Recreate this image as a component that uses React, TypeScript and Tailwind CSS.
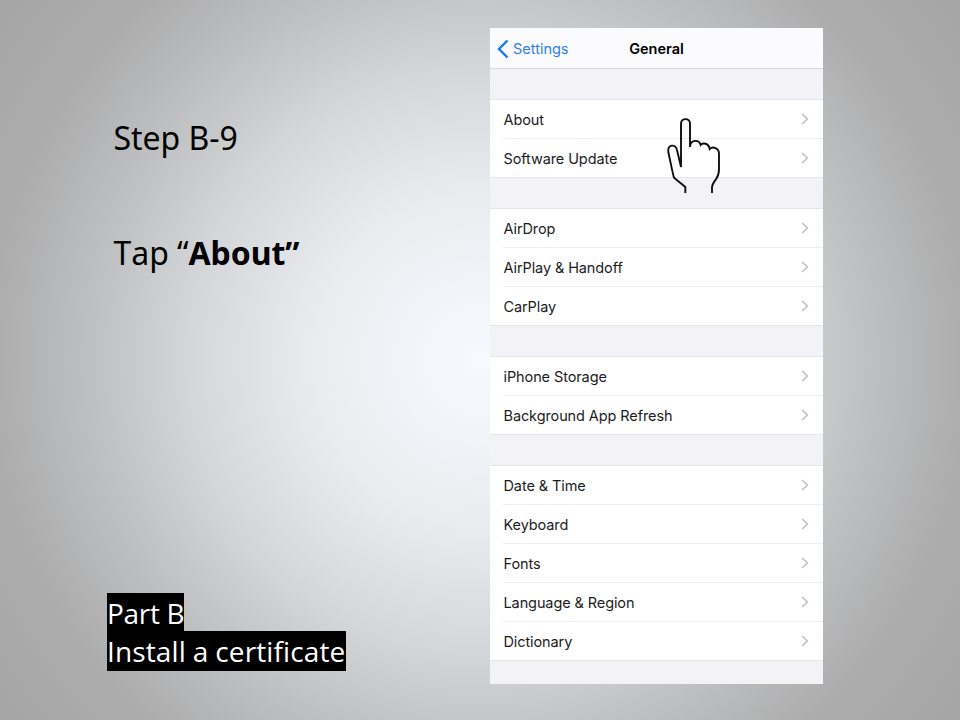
import React from "react";

const groups: string[][] = [
  ["About", "Software Update"],
  ["AirDrop", "AirPlay & Handoff", "CarPlay"],
  ["iPhone Storage", "Background App Refresh"],
  ["Date & Time", "Keyboard", "Fonts", "Language & Region", "Dictionary"],
];

function Chevron() {
  return (
    <svg width="8" height="12" viewBox="0 0 8 12" fill="none" stroke="#c1c1c4" strokeWidth="1.6">
      <path d="M1.2 1 6.3 6 1.2 11" />
    </svg>
  );
}

function Group({ rows }: { rows: string[] }) {
  return (
    <div className="border-t border-[#e5e5e9] bg-white">
      {rows.map((label, i) => (
        <div key={label} className={i === rows.length - 1 ? "border-b border-[#e5e5e9]" : "pl-[13px]"}>
          <div
            className={
              i === rows.length - 1
                ? "flex h-[38px] items-center justify-between pl-[13px] pr-[14px]"
                : "flex h-[39px] items-center justify-between border-b border-[#efeff1] pr-[14px]"
            }
          >
            <span className="pl-[0.5px] pt-px text-[14.5px] tracking-[-0.1px] text-[#1c1c1e]">{label}</span>
            <Chevron />
          </div>
        </div>
      ))}
    </div>
  );
}

function Hand() {
  return (
    <svg
      className="absolute left-[175px] top-[88px]"
      width="60"
      height="80"
      viewBox="30 18 180 240"
      fill="none"
      stroke="#0c0c0c"
      strokeWidth="5.6"
    >
      <path d="M91 249V231L57 203Q55 197 51 178L40 126C37 102 62 101 66 120L78 171V41C78 23 105 23 105 41V111C106 88 132 87 137 105C143 97 161 99 164 117C173 108 192 114 192 131V178C192 189 190 198 184 206C177 216 171 223 171 233V249" />
    </svg>
  );
}

export default function App() {
  return (
    <div className="flex h-[720px] w-[960px] justify-between overflow-hidden bg-[radial-gradient(circle_600px_at_480px_360px,#f8f9fe_0%,#f3f4f9_12%,#eaebef_28%,#dfe0e4_39%,#d3d4d7_50%,#c9cacb_57%,#bcbdbe_67%,#adadae_81%,#a5a5a5_100%)] pl-[107px] pr-[137px] pt-[28px] font-['Noto_Sans',sans-serif] text-black">
      <main className="flex w-[300px] flex-col">
        <h1 className="mt-[88px] pl-[6.500px] text-[32px] leading-[44px] tracking-[-0.05px] whitespace-nowrap [font-kerning:none]">Step B-9</h1>
        <p className="mt-[71px] pl-[6.500px] text-[32px] leading-[44px] tracking-[-0.05px] whitespace-nowrap [font-kerning:none]">
          Tap “<b>About”</b>
        </p>
        <footer className="mt-[318px] flex flex-col items-start font-['Open_Sans',sans-serif] text-[28px] text-white">
          <span className="h-[38px] w-[77px] bg-black leading-[41px] tracking-[-0.3px] whitespace-nowrap">Part B</span>
          <span className="h-[40px] w-[239px] bg-black leading-[41px] tracking-[0.12px] [word-spacing:-0.5px] whitespace-nowrap [font-variant-ligatures:common-ligatures]">
            Install a certificate
          </span>
        </footer>
      </main>
      <section className="relative h-[656px] w-[333px] bg-[#f2f2f7] font-['Inter',sans-serif]">
        <header className="grid h-[41px] grid-cols-3 items-center border-b border-[#d9d9dd] bg-[#fbfbfe] pt-px text-[14.5px]">
          <div className="flex items-center gap-[4px] pl-[7px] text-[#2f80ea]">
            <svg width="12" height="20" viewBox="0 0 12 20" fill="none" stroke="#1677f2" strokeWidth="2.4">
              <path d="M10.500 1.500 2 10 10.500 18.500" />
            </svg>
            <span className="pt-px">Settings</span>
          </div>
          <h2 className="pt-px text-center font-semibold">General</h2>
        </header>
        <div className="flex flex-col gap-[30px] pt-[30px]">
          {groups.map((rows) => (
            <Group key={rows[0]} rows={rows} />
          ))}
        </div>
        <Hand />
      </section>
    </div>
  );
}
